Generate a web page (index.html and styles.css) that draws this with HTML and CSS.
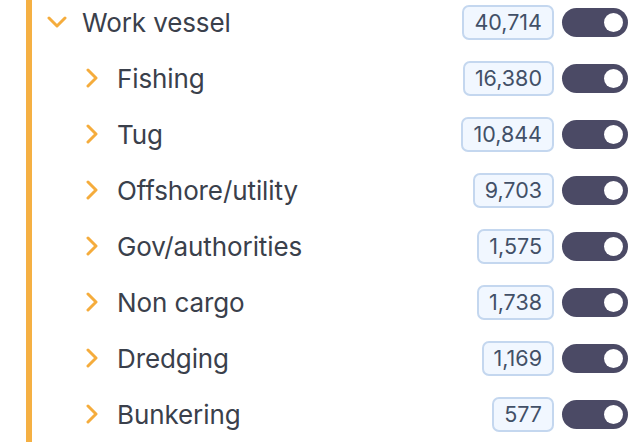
FILE: index.html
```html
<!DOCTYPE html>
<html lang="en">
<head>
    <meta charset="UTF-8">
    <meta name="viewport" content="width=device-width, initial-scale=1.0">
    <title>Vessel Types</title>
    <link rel="stylesheet" href="styles.css">
</head>
<body>
    <div class="group">
        <div class="row">
            <svg class="chevron" viewBox="0 0 20 20"><polyline points="2,6 10,14 18,6"/></svg>
            <span class="label">Work vessel</span>
            <span class="count">40,714</span>
            <span class="toggle on"><span class="knob"></span></span>
        </div>
        <div class="children">
            <div class="row">
                <svg class="chevron" viewBox="0 0 20 20"><polyline points="6,2 14,10 6,18"/></svg>
                <span class="label">Fishing</span>
                <span class="count">16,380</span>
                <span class="toggle on"><span class="knob"></span></span>
            </div>
            <div class="row">
                <svg class="chevron" viewBox="0 0 20 20"><polyline points="6,2 14,10 6,18"/></svg>
                <span class="label">Tug</span>
                <span class="count">10,844</span>
                <span class="toggle on"><span class="knob"></span></span>
            </div>
            <div class="row">
                <svg class="chevron" viewBox="0 0 20 20"><polyline points="6,2 14,10 6,18"/></svg>
                <span class="label">Offshore/utility</span>
                <span class="count">9,703</span>
                <span class="toggle on"><span class="knob"></span></span>
            </div>
            <div class="row">
                <svg class="chevron" viewBox="0 0 20 20"><polyline points="6,2 14,10 6,18"/></svg>
                <span class="label">Gov/authorities</span>
                <span class="count">1,575</span>
                <span class="toggle on"><span class="knob"></span></span>
            </div>
            <div class="row">
                <svg class="chevron" viewBox="0 0 20 20"><polyline points="6,2 14,10 6,18"/></svg>
                <span class="label">Non cargo</span>
                <span class="count">1,738</span>
                <span class="toggle on"><span class="knob"></span></span>
            </div>
            <div class="row">
                <svg class="chevron" viewBox="0 0 20 20"><polyline points="6,2 14,10 6,18"/></svg>
                <span class="label">Dredging</span>
                <span class="count">1,169</span>
                <span class="toggle on"><span class="knob"></span></span>
            </div>
            <div class="row">
                <svg class="chevron" viewBox="0 0 20 20"><polyline points="6,2 14,10 6,18"/></svg>
                <span class="label">Bunkering</span>
                <span class="count">577</span>
                <span class="toggle on"><span class="knob"></span></span>
            </div>
        </div>
    </div>
</body>
</html>
```

FILE: styles.css
```css
body {
    font-family: Inter, "Noto Sans", sans-serif;
    background-color: #fff;
    color: #3a404b;
    margin: 0;
    padding: 0;
    overflow: hidden;
}
.group {
    margin-left: 26px;
    margin-top: -6px;
    border-left: 6px solid #f5b043;
    min-height: 460px;
}
.row {
    display: flex;
    align-items: center;
    height: 56px;
    padding-left: 15px;
    padding-right: 10px;
}
.children .row {
    padding-left: 50px;
}
.chevron {
    width: 20px;
    height: 20px;
    flex: none;
    margin-right: 15px;
}
.chevron polyline {
    fill: none;
    stroke: #f5ac3c;
    stroke-width: 3;
    stroke-linecap: round;
    stroke-linejoin: round;
}
.label {
    flex: 1;
    font-size: 26px;
    letter-spacing: -0.1px;
}
.count {
    box-sizing: border-box;
    height: 35px;
    display: flex;
    align-items: center;
    padding: 0 10px;
    border: 2px solid #c4d7ef;
    border-radius: 7px;
    background-color: #f1f7ff;
    color: #425067;
    font-size: 21.5px;
}
.toggle {
    box-sizing: border-box;
    width: 66px;
    height: 29px;
    margin-left: 8px;
    border-radius: 15px;
    background-color: #4b4a65;
    display: flex;
    align-items: center;
    justify-content: flex-end;
    padding-right: 5px;
}
.knob {
    width: 19px;
    height: 19px;
    border-radius: 50%;
    background-color: #fff;
}
```
